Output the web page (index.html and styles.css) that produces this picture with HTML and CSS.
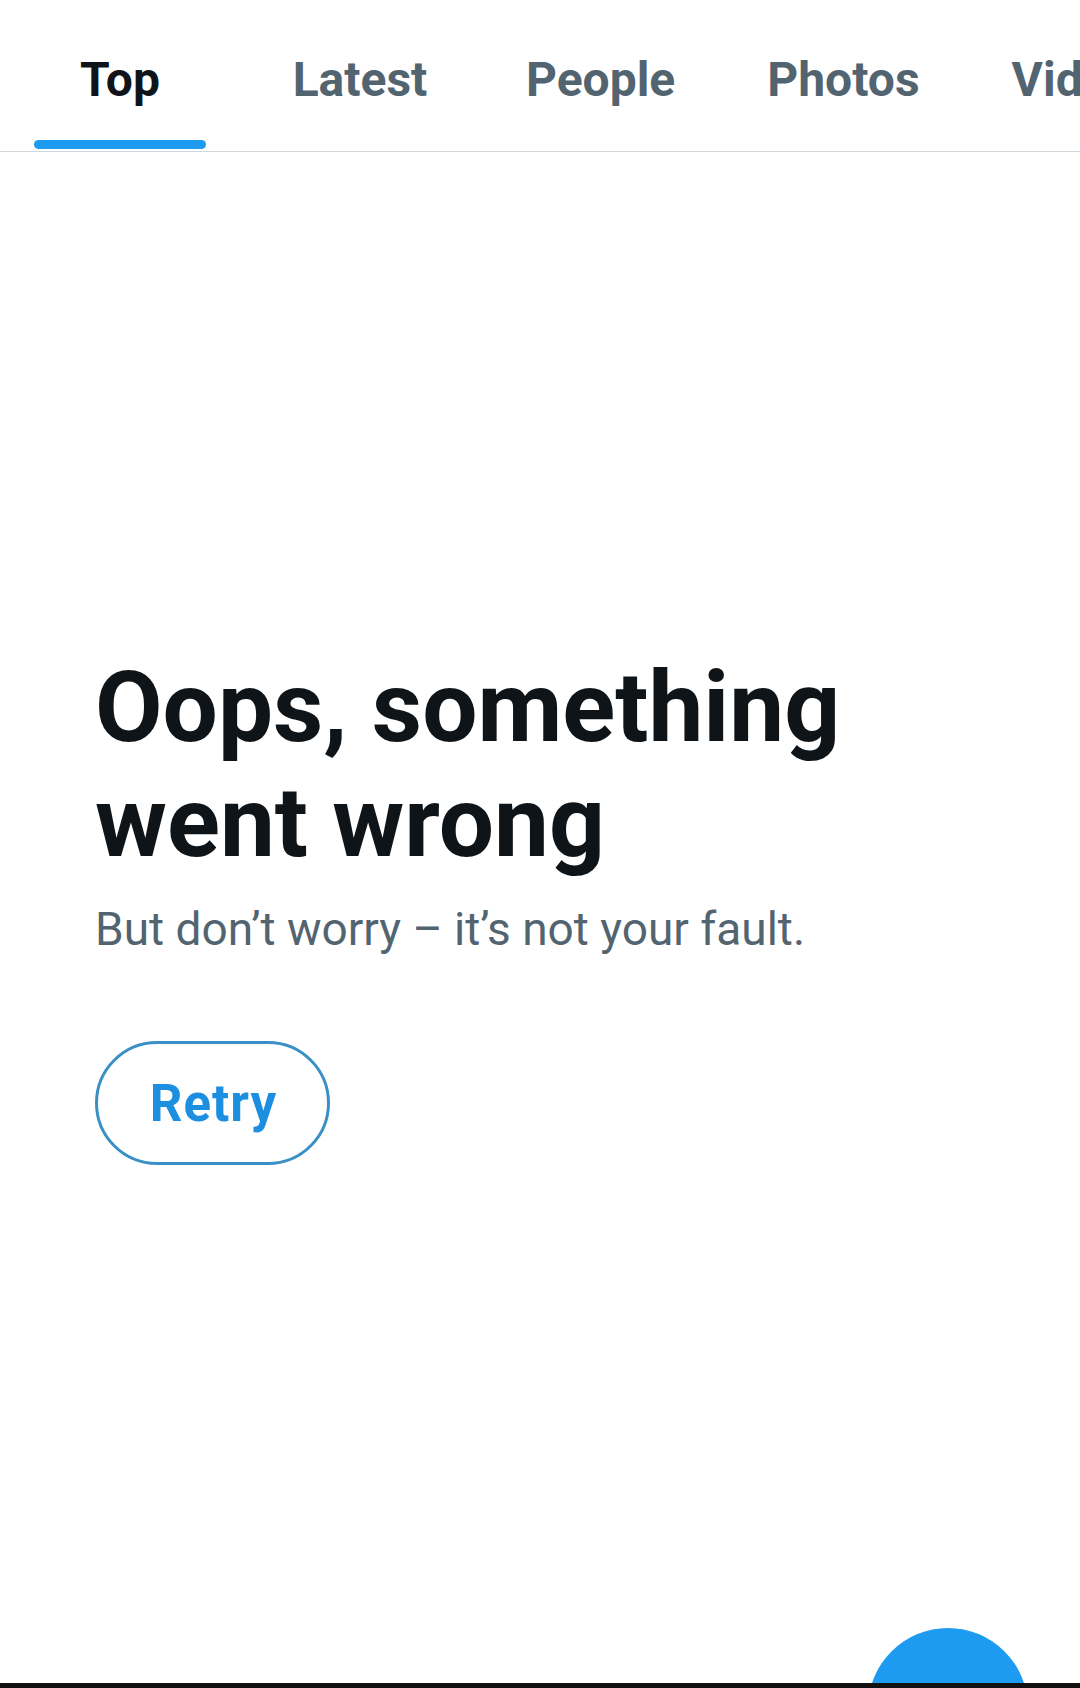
FILE: index.html
```html
<!DOCTYPE html>
<html lang="en">
<head>
  <meta charset="UTF-8" />
  <meta name="viewport" content="width=device-width, initial-scale=1.0"/>
  <title>Search</title>
  <link rel="stylesheet" href="styles.css">
</head>
<body>
  <div class="app">
    <nav class="tabs">
      <div class="tab active">
        <span class="tab-label">Top<span class="indicator"></span></span>
      </div>
      <div class="tab"><span class="tab-label">Latest</span></div>
      <div class="tab"><span class="tab-label">People</span></div>
      <div class="tab"><span class="tab-label">Photos</span></div>
      <div class="tab"><span class="tab-label">Videos</span></div>
    </nav>

    <main class="error">
      <h1>Oops, something went wrong</h1>
      <p>But don’t worry – it’s not your fault.</p>
      <button type="button" class="retry">Retry</button>
    </main>

    <div class="fab"></div>
    <div class="system-bar"></div>
  </div>
</body>
</html>
```

FILE: styles.css
```css
* {
  box-sizing: border-box;
}

body {
  margin: 0;
  background: #fff;
  font-family: Roboto, "Liberation Sans", Arial, sans-serif;
  color: #0f1419;
}

.app {
  position: relative;
  height: 1688px;
  overflow: hidden;
  display: flex;
  flex-direction: column;
}

.tabs {
  display: flex;
  height: 152px;
  border-bottom: 1px solid #cfd9de;
  overflow: hidden;
  flex-shrink: 0;
}

.tab {
  flex: 0 0 240px;
  display: flex;
  justify-content: center;
}

.tab-label {
  display: flex;
  flex-direction: column;
  align-items: center;
  padding: 52px 46px 0;
  font-size: 48px;
  font-weight: bold;
  line-height: 56px;
  color: #536471;
}

.tab.active .tab-label {
  color: #0f1419;
}

.indicator {
  display: block;
  width: calc(100% + 92px);
  height: 9px;
  margin-top: auto;
  margin-bottom: 2px;
  border-radius: 5px;
  background: #1d9bf0;
}

.error {
  padding: 498px 0 0 95px;
}

.error h1 {
  margin: 0;
  max-width: 840px;
  font-size: 98px;
  line-height: 115px;
  font-weight: bold;
}

.error p {
  margin: 20px 0 0;
  font-size: 46px;
  line-height: 58px;
  color: #536471;
}

.retry {
  margin-top: 83px;
  width: 235px;
  height: 124px;
  padding: 0 0 0 2px;
  border: 3px solid #3a90c6;
  border-radius: 62px;
  background: #fff;
  color: #1d8fe0;
  font-family: Roboto, "Liberation Sans", Arial, sans-serif;
  font-size: 51px;
  font-weight: bold;
  letter-spacing: 1px;
  cursor: pointer;
}

.fab {
  position: absolute;
  left: 868px;
  top: 1628px;
  width: 160px;
  height: 160px;
  border-radius: 50%;
  background: #1d9bf0;
}

.system-bar {
  position: absolute;
  left: 0;
  right: 0;
  bottom: 0;
  height: 5px;
  background: #111;
}
```
